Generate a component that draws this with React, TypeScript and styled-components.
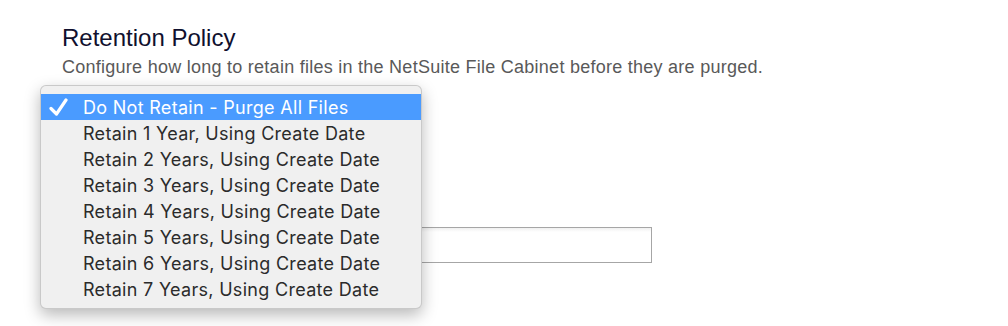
import React from "react";
import styled, { createGlobalStyle } from "styled-components";

const GlobalStyle = createGlobalStyle`
  html, body { margin: 0; padding: 0; background: #ffffff; }
  body { font-family: "Liberation Sans", Arial, sans-serif; }
`;

const Page = styled.div`
  position: relative;
  width: 1008px;
  height: 326px;
  overflow: hidden;
  padding: 24px 0 0 62px;
  box-sizing: border-box;
`;

const Title = styled.h2`
  margin: 0;
  font-size: 24px;
  line-height: 28px;
  font-weight: normal;
  color: #10102e;
`;

const Description = styled.p`
  margin: 4px 0 0;
  font-size: 18px;
  line-height: 22px;
  letter-spacing: 0.26px;
  color: #595959;
`;

const Form = styled.div`
  display: flex;
  flex-direction: column;
  margin-top: 13px;
`;

const SelectField = styled.div`
  width: 340px;
  height: 26px;
  border: 1px solid #b5b5b5;
  border-radius: 4px;
  box-sizing: border-box;
`;

const TextInput = styled.div`
  margin-top: 110px;
  width: 590px;
  height: 36px;
  border: 1px solid #a6a6a6;
  box-sizing: border-box;
  background: linear-gradient(#f0f0f0, #ffffff 4px);
`;

const Menu = styled.div`
  position: absolute;
  left: 40px;
  top: 85px;
  width: 382px;
  box-sizing: border-box;
  padding: 8px 0 6px;
  background: #f0f0f0;
  border: 1px solid rgba(0, 0, 0, 0.16);
  border-radius: 6px;
  box-shadow: 0 6px 16px rgba(0, 0, 0, 0.28);
`;

const MenuItem = styled.div<{ $selected?: boolean }>`
  display: grid;
  grid-template-columns: 42px 1fr;
  align-items: center;
  height: 26px;
  font-family: Inter, "Liberation Sans", sans-serif;
  font-size: 18px;
  letter-spacing: 0.3px;
  color: ${(p) => (p.$selected ? "#ffffff" : "#2b2b2b")};
  background: ${(p) => (p.$selected ? "#4a9bff" : "transparent")};
`;

const CheckCell = styled.span`
  display: flex;
  align-items: center;
  justify-content: flex-end;
  padding-right: 15px;
`;

const options = [
  "Do Not Retain - Purge All Files",
  "Retain 1 Year, Using Create Date",
  "Retain 2 Years, Using Create Date",
  "Retain 3 Years, Using Create Date",
  "Retain 4 Years, Using Create Date",
  "Retain 5 Years, Using Create Date",
  "Retain 6 Years, Using Create Date",
  "Retain 7 Years, Using Create Date",
];

const Check = () => (
  <svg width="19" height="18" viewBox="0 0 19 18">
    <path
      d="M2 10.5 L7.5 16 L17 2"
      fill="none"
      stroke="#ffffff"
      strokeWidth="3.2"
      strokeLinecap="round"
      strokeLinejoin="round"
    />
  </svg>
);

export default function App() {
  return (
    <>
      <GlobalStyle />
      <Page>
        <Title>Retention Policy</Title>
        <Description>
          Configure how long to retain files in the NetSuite File Cabinet before they are purged.
        </Description>
        <Form>
          <SelectField />
          <TextInput />
        </Form>
        <Menu>
          {options.map((o, i) => (
            <MenuItem key={o} $selected={i === 0}>
              <CheckCell>{i === 0 ? <Check /> : null}</CheckCell>
              <span>{o}</span>
            </MenuItem>
          ))}
        </Menu>
      </Page>
    </>
  );
}
